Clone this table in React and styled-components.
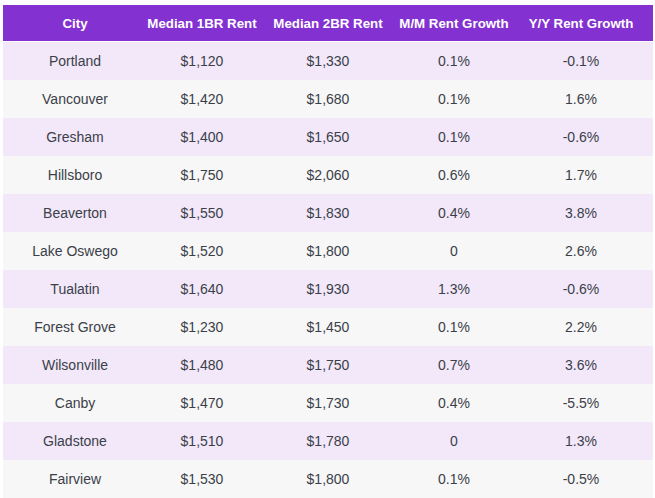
import React from "react";
import styled, { createGlobalStyle } from "styled-components";

const GlobalStyle = createGlobalStyle`
  body {
    margin: 0;
    background: #ffffff;
    font-family: "Liberation Sans", Arial, sans-serif;
  }
`;

const rows = [
  ["Portland", "$1,120", "$1,330", "0.1%", "-0.1%"],
  ["Vancouver", "$1,420", "$1,680", "0.1%", "1.6%"],
  ["Gresham", "$1,400", "$1,650", "0.1%", "-0.6%"],
  ["Hillsboro", "$1,750", "$2,060", "0.6%", "1.7%"],
  ["Beaverton", "$1,550", "$1,830", "0.4%", "3.8%"],
  ["Lake Oswego", "$1,520", "$1,800", "0", "2.6%"],
  ["Tualatin", "$1,640", "$1,930", "1.3%", "-0.6%"],
  ["Forest Grove", "$1,230", "$1,450", "0.1%", "2.2%"],
  ["Wilsonville", "$1,480", "$1,750", "0.7%", "3.6%"],
  ["Canby", "$1,470", "$1,730", "0.4%", "-5.5%"],
  ["Gladstone", "$1,510", "$1,780", "0", "1.3%"],
  ["Fairview", "$1,530", "$1,800", "0.1%", "-0.5%"],
];

const headers = [
  "City",
  "Median 1BR Rent",
  "Median 2BR Rent",
  "M/M Rent Growth",
  "Y/Y Rent Growth",
];

// column widths picked so the centred text lands where it sits in the shot
const widths = [144, 110, 142, 110, 144];

export default function App() {
  return (
    <>
      <GlobalStyle />
      <Wrapper>
        <Table>
          <colgroup>
            {widths.map((w, i) => (
              <Col key={i} $w={w} />
            ))}
          </colgroup>
          <thead>
            <HeadRow>
              {headers.map((h) => (
                <Th key={h}>{h}</Th>
              ))}
            </HeadRow>
          </thead>
          <tbody>
            {rows.map((r, i) => (
              <Row key={r[0]} $odd={i % 2 === 0}>
                {r.map((c, j) => (
                  <Td key={j}>{c}</Td>
                ))}
              </Row>
            ))}
          </tbody>
        </Table>
      </Wrapper>
    </>
  );
}

const Wrapper = styled.div`
  padding: 5px 2px 0 3px;
`;

const Table = styled.table`
  width: 650px;
  border-collapse: collapse;
  table-layout: fixed;
`;

const Col = styled.col`
  width: ${(p) => p.$w}px;
`;

const HeadRow = styled.tr`
  background: #8332d1;
  border-bottom: 1px solid #ffffff;
`;

const Th = styled.th`
  height: 36px;
  padding: 0;
  color: #ffffff;
  font-size: 13.3px;
  font-weight: 700;
  text-align: center;
  vertical-align: middle;
  white-space: nowrap;
`;

const Row = styled.tr`
  background: ${(p) => (p.$odd ? "#f2e8fa" : "#f7f7f7")};
`;

const Td = styled.td`
  height: 38px;
  padding: 0;
  color: #3b4048;
  font-size: 14px;
  text-align: center;
  vertical-align: middle;
`;
